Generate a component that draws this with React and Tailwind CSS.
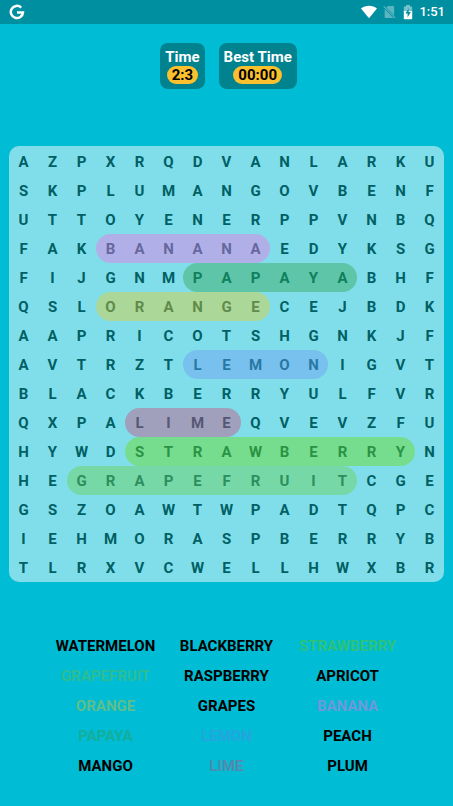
import React from "react";

const ROWS = [
  "AZPXRQDVANLARKU",
  "SKPLUMANGOVBENF",
  "UTTOYENERPPVNBQ",
  "FAKBANANAEDYKSG",
  "FIJGNMPAPAYABHF",
  "QSLORANGECEJBDK",
  "AAPRICOTSHGNKJF",
  "AVTRZTLEMONIGVT",
  "BLACKBERRYULFVR",
  "QXPALIMEQVEVZFU",
  "HYWDSTRAWBERRYN",
  "HEGRAPEFRUITCGE",
  "GSZOAWTWPADTQPC",
  "IEHMORASPBERRYB",
  "TLRXVCWELLHWXBR",
];

const FOUND = {
  3: { start: 3, end: 8, cell: "bg-[#b1afe8] text-[#66679c]" },
  4: { start: 6, end: 11, cell: "bg-[#5ec5a8] text-[#0f7f5d]" },
  5: { start: 3, end: 8, cell: "bg-[#abd798] text-[#608b4b]" },
  7: { start: 6, end: 10, cell: "bg-[#78c0ed] text-[#2878a5]" },
  9: { start: 4, end: 7, cell: "bg-[#a0a0bd] text-[#565772]" },
  10: { start: 4, end: 13, cell: "bg-[#76dd8f] text-[#2b9344]" },
  11: { start: 2, end: 11, cell: "bg-[#77d8a7] text-[#2c8f5d]" },
};

const WORDS = [
  ["WATERMELON", "text-black"],
  ["BLACKBERRY", "text-black"],
  ["STRAWBERRY", "text-[#2bc37c]"],
  ["GRAPEFRUIT", "text-[#2bbe94]"],
  ["RASPBERRY", "text-black"],
  ["APRICOT", "text-black"],
  ["ORANGE", "text-[#5fbe8b]"],
  ["GRAPES", "text-black"],
  ["BANANA", "text-[#6e99da]"],
  ["PAPAYA", "text-[#14ae9b]"],
  ["LEMON", "text-[#25a5df]"],
  ["PEACH", "text-black"],
  ["MANGO", "text-black"],
  ["LIME", "text-[#5689ae]"],
  ["PLUM", "text-black"],
];

function StatusBar() {
  return (
    <header className="flex h-6 items-center justify-between bg-[#008ea1] pr-2 pl-[9px] text-white">
      <svg width="16" height="16" viewBox="0 0 16 16" fill="none" aria-label="Google">
        <path
          d="M12.2 3.6A6.1 6.1 0 1 0 14 8.4H8"
          stroke="currentColor"
          strokeWidth="2.5"
        />
      </svg>
      <div className="flex items-center">
        <svg width="16" height="14" viewBox="0 0 16 14" className="mr-[6px]" aria-label="Wi-Fi">
          <path d="M0 3.4C4.6-.3 11.4-.3 16 3.4L8 13.2z" fill="currentColor" />
        </svg>
        <svg width="13" height="14" viewBox="0 0 13 14" className="mr-[7px] opacity-35" aria-label="No SIM">
          <path d="M5 1h5.2q1 0 1 1v8.4L3.4 2.6z" fill="currentColor" />
          <path d="M1.6 4.1l8.8 8.8H2.6q-1 0-1-1z" fill="currentColor" />
          <path d="M.6 1.2l11.6 11.9" stroke="currentColor" strokeWidth="1.1" />
        </svg>
        <svg width="10" height="15" viewBox="0 0 10 15" className="mr-[6px]" aria-label="Battery charging">
          <path d="M3 0h4v1.6h1.4q.8 0 .8.8V7H.8V2.4q0-.8.8-.8H3z" fill="currentColor" opacity=".45" />
          <path d="M.8 6h8.4v7.4q0 .8-.8.8H1.6q-.8 0-.8-.8z" fill="currentColor" />
          <path d="M5.8 3.2L2.4 8.6h2.2v3.8L7.8 7H5.6z" fill="#008ea1" />
        </svg>
        <span className="text-[13px] leading-6 font-medium">1:51</span>
      </div>
    </header>
  );
}

function Timer({ label, value }) {
  return (
    <div className="flex h-[46px] flex-col items-center rounded-lg bg-[#00838f] px-[5px] pt-[5px] text-[15px] font-bold">
      <span className="leading-[18px] text-white">{label}</span>
      <span className="rounded-full bg-[#fbc02d] px-[5px] leading-[18px] text-black">{value}</span>
    </div>
  );
}

function Cell({ letter, row, col }) {
  const word = FOUND[row];
  const inside = word && col >= word.start && col <= word.end;
  const color = inside ? word.cell : "text-[#006064]";
  const left = inside && col === word.start ? "rounded-l-full" : "";
  const right = inside && col === word.end ? "rounded-r-full" : "";
  return (
    <span
      role="gridcell"
      className={`flex aspect-square items-center justify-center ${color} ${left} ${right}`}
    >
      {letter}
    </span>
  );
}

export default function App() {
  return (
    <div className="min-h-screen bg-[#00bcd4] font-[Roboto,sans-serif]">
      <StatusBar />
      <main>
        <section className="flex justify-center gap-[14px] pt-[19px] pl-1" aria-label="Timers">
          <Timer label="Time" value="2:3" />
          <Timer label="Best Time" value="00:00" />
        </section>
        <section
          role="grid"
          aria-label="Letters"
          className="mx-[9px] mt-[57px] rounded-[10px] bg-[#80deea] pt-px text-[15px] leading-5 font-bold"
        >
          {ROWS.map((line, row) => (
            <div role="row" key={row} className="grid grid-cols-[repeat(15,minmax(0,1fr))]">
              {line.split("").map((letter, col) => (
                <Cell key={col} letter={letter} row={row} col={col} />
              ))}
            </div>
          ))}
        </section>
        <ul className="mx-[45px] mt-[49px] grid grid-cols-3 text-center text-[15px] leading-[30px] font-bold">
          {WORDS.map(([word, color]) => (
            <li key={word} className={color}>
              {word}
            </li>
          ))}
        </ul>
      </main>
    </div>
  );
}
